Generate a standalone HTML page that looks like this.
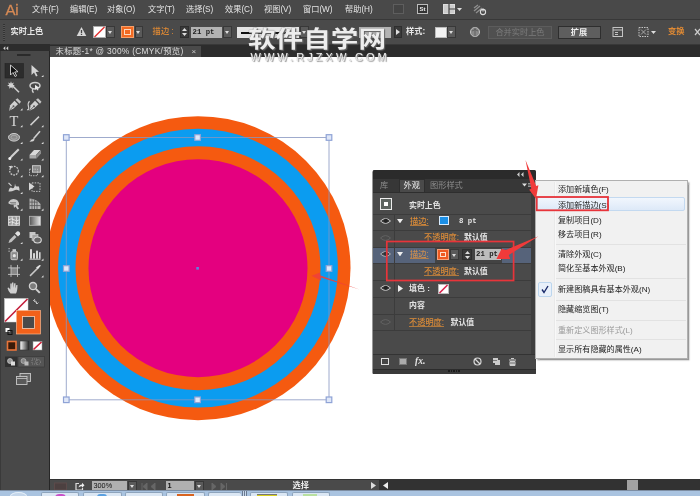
<!DOCTYPE html>
<html lang="zh-CN">
<head>
<meta charset="utf-8">
<title>Illustrator - 外观</title>
<style>
*{box-sizing:border-box;margin:0;padding:0}
html,body{width:700px;height:496px;overflow:hidden;background:#fff}
body{position:relative;will-change:transform;font-family:"Liberation Sans","Noto Sans CJK SC",sans-serif;font-size:8.2px;color:#ddd;line-height:1}
.abs,.abs>*{position:absolute}
.t{white-space:nowrap;line-height:11px;font-size:8.2px}
#menubar{left:0;top:0;width:700px;height:20px;background:#494949;border-bottom:1px solid #383838}
#menubar .mi{top:4px;color:#e4e4e4}
#ctrl{left:0;top:20px;width:700px;height:24px;background:#4a4a4a}
.dd{background:#5a5a5a;border:1px solid #383838}
.dd:after{content:"";position:absolute;left:50%;top:50%;margin:-1px 0 0 -2.5px;border:2.5px solid transparent;border-top:3px solid #ddd;border-bottom:0}
.or{color:#e08a34;font-weight:500}
#tabbar{left:49px;top:43.5px;width:651px;height:13.5px;background:#2c2c2c;border-top:1px solid #383838}
#tab{left:1px;top:1.5px;width:151px;height:11px;background:#4a4a4a}
#tools{left:0;top:44px;width:50px;height:447px;background:#484848;border-right:1.5px solid #262626;border-left:1px solid #3a3a3a}
#toolhead{left:-1px;top:0;width:50px;height:7px;background:#2c2c2c}
#status{left:50px;top:479px;width:650px;height:12px;background:#4a4a4a;border-top:1px solid #333}
#taskbar{left:0;top:490px;width:700px;height:6px;background:#a9c3e0}
#taskbar .tb{top:1.5px;height:6px;background:#dbe7f4;border:1px solid #8ea4bc;border-bottom:0;border-radius:2px 2px 0 0}
#panel{left:373px;top:170px;width:163px;height:204px;background:#4a4a4a;border-radius:2px 2px 1px 1px;overflow:hidden;box-shadow:-.5px 0 0 #333}
#panel .row{left:0;width:163px;border-top:1px solid #3c3c3c}
#panel .w{color:#e4e4e4;font-weight:bold;font-size:7.9px}
#panel .o{color:#dc8c38;text-decoration:underline;text-decoration-color:rgba(220,140,56,.7);text-decoration-thickness:.6px;text-underline-offset:1px;font-weight:500}
#cmenu{left:535px;top:179.5px;width:153px;height:179.5px;background:#f1f1f1;border:1px solid #b0b0b0;box-shadow:1.5px 1.5px 1.5px rgba(0,0,0,.4)}
#cmenu .it{left:22px;color:#1c1c1c;font-size:8.1px;line-height:11px;white-space:nowrap}
#cmenu .sep{left:20px;width:130px;height:1px;background:#e2e2e2}
</style>
</head>
<body>
<div id="menubar" class="abs">
<span style="left:5.5px;top:1px;font-size:15px;color:#d68a55;line-height:17px;letter-spacing:-.3px;-webkit-text-stroke:.3px #d68a55">Ai</span>
<span class="t mi" style="left:32px">文件(F)</span>
<span class="t mi" style="left:70px">编辑(E)</span>
<span class="t mi" style="left:107px">对象(O)</span>
<span class="t mi" style="left:148px">文字(T)</span>
<span class="t mi" style="left:186px">选择(S)</span>
<span class="t mi" style="left:225px">效果(C)</span>
<span class="t mi" style="left:264px">视图(V)</span>
<span class="t mi" style="left:303px">窗口(W)</span>
<span class="t mi" style="left:345px">帮助(H)</span>
<span style="left:393px;top:4px;width:11px;height:10px;border:1px solid #5e5e5e;background:#444"></span>
<span style="left:417px;top:4px;width:11px;height:10px;border:1px solid #bbb;background:#333;font-size:6px;line-height:8px;color:#eee;text-align:center;font-weight:bold">St</span>
<svg style="left:443px;top:4px" width="22" height="11" viewBox="0 0 22 11"><rect x="0.5" y="0.5" width="11" height="9" fill="#ccc" stroke="#ddd"/><path d="M6 0v10M6 5h6" stroke="#444" stroke-width="1.2"/><path d="M14 4h5l-2.5 3z" fill="#ddd"/></svg>
<svg style="left:473px;top:3px" width="14" height="13" viewBox="0 0 14 13"><path d="M1 8l6-5M3 10l6-5M1 5l4-3" stroke="#909090" stroke-width="1.3" fill="none"/><circle cx="10" cy="9" r="2.6" fill="none" stroke="#ddd" stroke-width="1.1"/><path d="M10 5.5v3" stroke="#ddd" stroke-width="1.1"/></svg>
</div>
<div id="ctrl" class="abs">
<span style="left:3px;top:4px;width:2px;height:17px;background:repeating-linear-gradient(#333 0 1px,#555 1px 2px)"></span>
<span class="t" style="left:10.5px;top:6px;color:#e8e8e8;font-weight:bold">实时上色</span>
<svg style="left:76px;top:6px" width="11" height="11" viewBox="0 0 11 11"><path d="M5.5 1L10.3 10H.7z" fill="#d8d8d8"/><path d="M5.5 4v3.2M5.5 8v1" stroke="#444" stroke-width="1.3"/></svg>
<svg style="left:93px;top:6px" width="13" height="12" viewBox="0 0 13 12"><rect x=".5" y=".5" width="12" height="11" fill="#fff" stroke="#aaa"/><path d="M1.5 11L11.5 1" stroke="#e03030" stroke-width="1.5"/></svg>
<span class="dd" style="left:106px;top:6px;width:9px;height:12px"></span>
<span style="left:120.5px;top:5.5px;width:13px;height:12.5px;background:#f26a22;border:1px solid #f7a06a"></span>
<span style="left:123.5px;top:8.5px;width:7px;height:6.5px;border:1px solid #fbd9c0;background:#f26a22"></span>
<span class="dd" style="left:134.5px;top:6px;width:8px;height:12px"></span>
<span class="t or" style="left:152.5px;top:6px;letter-spacing:.4px">描边<span style="position:static;margin-left:1.5px">:</span></span>
<span style="left:180px;top:6px;width:9px;height:12px;background:#3a3a3a;border:1px solid #2e2e2e"></span>
<svg style="left:181px;top:7px" width="7" height="10" viewBox="0 0 7 10"><path d="M3.5 1L6 4H1zM3.5 9L6 6H1z" fill="#ddd"/></svg>
<span style="left:191px;top:6.5px;width:30.5px;height:11.5px;background:#b3b3b3;font-family:'Liberation Mono',monospace;font-size:7.3px;font-weight:bold;line-height:11px;color:#222;padding-left:1.5px;white-space:nowrap">21 pt</span>
<span class="dd" style="left:222.5px;top:6px;width:9px;height:12px"></span>
<span style="left:237px;top:6.5px;width:62px;height:11.5px;background:#e4e4e4"></span>
<span style="left:241px;top:11.5px;width:54px;height:2px;background:#111"></span>
<span class="dd" style="left:300px;top:6px;width:9px;height:12px"></span>
<span style="left:358.5px;top:6.5px;width:32.5px;height:11.5px;background:#b3b3b3"></span>
<span style="left:393.5px;top:6px;width:8px;height:12px;background:#3a3a3a;border:1px solid #2e2e2e"></span>
<svg style="left:395.5px;top:9px" width="4" height="6" viewBox="0 0 4 6"><path d="M0 0v6L4 3z" fill="#ddd"/></svg>
<span class="t" style="left:406px;top:6px;color:#e6e6e6;font-weight:bold">样式:</span>
<span style="left:435px;top:6.5px;width:11.5px;height:11.5px;background:#f2f2f2;border:1px solid #bbb"></span>
<span class="dd" style="left:447px;top:6px;width:9px;height:12px"></span>
<svg style="left:468.5px;top:5.5px" width="12" height="12" viewBox="0 0 12 12"><circle cx="6" cy="6" r="4.6" fill="#8a8a8a" stroke="#bdbdbd"/><path d="M3 5q3-3 6 0M6 1.5v9" stroke="#555" fill="none" stroke-width=".8"/></svg>
<span class="t" style="left:488px;top:5.5px;width:64px;height:13px;border:1px solid #5c5c5c;background:#505050;color:#7c7c7c;text-align:center">合并实时上色</span>
<span class="t" style="left:557.5px;top:5.5px;width:43px;height:13px;border:1px solid #2e2e2e;background:#5e5e5e;color:#eee;text-align:center;font-weight:bold">扩展</span>
<svg style="left:612px;top:6px" width="12" height="12" viewBox="0 0 12 12"><rect x="1" y="1.5" width="9.5" height="9" fill="none" stroke="#c4c4c4"/><path d="M1 4h9.5M3 6.5h3M3 8.5h3" stroke="#c4c4c4"/></svg>
<svg style="left:638px;top:6px" width="20" height="12" viewBox="0 0 20 12"><rect x="1" y="1.5" width="9" height="9" fill="none" stroke="#c4c4c4" stroke-dasharray="1.5 1"/><path d="M3 3.5l5 5M8 3.5l-5 5" stroke="#bbb" stroke-width=".8"/><path d="M13 5h5l-2.5 3z" fill="#ddd"/></svg>
<span class="t or" style="left:668px;top:6px;font-weight:bold">变换</span>
<svg style="left:694px;top:6px" width="6" height="12" viewBox="0 0 6 12"><path d="M1 3l5 6M6 3L1 9" stroke="#ccc" stroke-width="1.2"/></svg>
</div>
<div id="tabbar" class="abs"><div id="tab"></div>
<span class="t" style="left:6.5px;top:1.5px;color:#dcdcdc;line-height:11px;font-size:8.4px;letter-spacing:.28px">未标题-1* @ 300% (CMYK/预览)</span>
<span class="t" style="left:142.5px;top:1.5px;color:#ccc;line-height:11px;font-size:8px">×</span>
</div>
<div id="tools" class="abs"><div id="toolhead"></div></div>
<svg class="abs" style="left:0;top:44px" width="50" height="447" viewBox="0 44 50 447">
<path d="M5.3 46.2L3.2 48.2 5.3 50.2zM8.2 46.2L6.1 48.2 8.2 50.2z" fill="#d0d0d0"/>
<rect x="17" y="54" width="13.500" height="2" fill="#2a2a2a"/>
<rect x="5" y="63.500" width="18.500" height="14.500" fill="#2c2c2c" stroke="#242424" stroke-width=".6"/>
<g transform="translate(14.0 70.5)"><path d="M-3.500-5.500V4.500L-1 2 1 6 2.600 5.200.700 1.500 4 1.200z" fill="#111" stroke="#d8d8d8" stroke-width=".9"/></g>
<g transform="translate(35.0 70.5)"><path d="M-3.500-5.500V4.500L-1 2 1 6 2.600 5.200.700 1.500 4 1.200z" fill="#d4d4d4"/></g>
<path d="M41.3 77.1l2.200 0 0-2.200z" fill="#e0e0e0"/>
<g transform="translate(14.0 87.2)"><path d="M-2-2L5 5" stroke="#cfcfcf" stroke-width="1.600"/><path d="M-3-6l.8 2.200 2.200-.8-1.200 2 2 1.200-2.200.6.200 2.400-1.800-1.600-1.800 1.600.2-2.400-2.200-.6 2-1.200-1.200-2 2.200.8z" fill="#d4d4d4"/></g>
<g transform="translate(35.0 87.2)"><ellipse cx="0" cy="-1.500" rx="5" ry="3.200" fill="none" stroke="#cfcfcf" stroke-width="1.500"/><path d="M-2 1.500q-1.500 2 .5 4" stroke="#cfcfcf" stroke-width="1.300" fill="none"/><path d="M0-2.500v5l1.500-1.200 1 2 1-.5-1-2 1.800-.3z" fill="#e8e8e8"/></g>
<g transform="translate(14.0 105.2)"><path d="M-5 5.500l1.200-5.500 4.300-4.500 3.500 3.500-4.500 4.300z" fill="#d0d0d0"/><path d="M1.500-5.500l2-1.500 3.500 3.500-1.500 2z" fill="#c4c4c4"/><path d="M-4.500 5l3.500-3.500" stroke="#555" stroke-width=".8"/><circle cx="-.5" cy="1" r="1" fill="#555"/></g>
<path d="M20.3 110.5l2.200 0 0-2.200z" fill="#e0e0e0"/>
<g transform="translate(34.5 105.2)"><path d="M-5 5.500l1.200-5.500 4.300-4.500 3.500 3.500-4.500 4.300z" fill="#d0d0d0"/><path d="M1.500-5.500l2-1.500 3.500 3.500-1.500 2z" fill="#c4c4c4"/><path d="M-4.500 5l3.500-3.500" stroke="#555" stroke-width=".8"/><circle cx="-.5" cy="1" r="1" fill="#555"/><path d="M-7.500 4.500q2.500.5 1.500-3t1-5.500" stroke="#cfcfcf" stroke-width="1.200" fill="none"/></g>
<g transform="translate(14.0 120.6)"><text x="0" y="5" text-anchor="middle" font-family="Liberation Serif,serif" font-size="14.500" fill="#d8d8d8">T</text></g>
<path d="M20.3 127.2l2.200 0 0-2.200z" fill="#e0e0e0"/>
<g transform="translate(35.0 120.6)"><path d="M-4.500 4.500L4 -4" stroke="#cfcfcf" stroke-width="1.500"/></g>
<path d="M41.3 127.2l2.200 0 0-2.200z" fill="#e0e0e0"/>
<g transform="translate(14.0 137.3)"><ellipse cx="0" cy="0" rx="5.500" ry="3.800" fill="#8a8a8a" stroke="#d0d0d0" stroke-width="1"/><ellipse cx="0" cy="0" rx="3" ry="2" fill="none" stroke="#bbb" stroke-width=".6"/></g>
<path d="M20.3 143.9l2.200 0 0-2.200z" fill="#e0e0e0"/>
<g transform="translate(35.0 137.3)"><path d="M5-6L-1.500 1.500" stroke="#cfcfcf" stroke-width="1.600"/><path d="M-5.500 4.500q2.500-4 5-2.500 0 2.500-5 2.500z" fill="#d8d8d8"/></g>
<path d="M41.3 143.9l2.200 0 0-2.200z" fill="#e0e0e0"/>
<g transform="translate(14.0 154.0)"><path d="M4-5.500l1.500 1.500-7.500 7.500-3 1.500 1.500-3z" fill="#cfcfcf"/><circle cx="-4.200" cy="4.500" r="1.500" fill="#f0f0f0"/></g>
<path d="M20.3 160.6l2.200 0 0-2.200z" fill="#e0e0e0"/>
<g transform="translate(35.0 154.0)"><path d="M-5.500 1l4.500-5h6.500l-4.500 5z" fill="#d8d8d8"/><path d="M-5.500 1h7v3.500h-7z" fill="#a8a8a8"/><path d="M1.500 1l4.500-5v3.500l-4.500 5z" fill="#8c8c8c"/></g>
<path d="M41.3 160.6l2.200 0 0-2.200z" fill="#e0e0e0"/>
<g transform="translate(14.0 170.7)"><circle cx="0" cy="0" r="4.300" fill="none" stroke="#c4c4c4" stroke-width="1.300" stroke-dasharray="1.800 1"/><path d="M-5.500-4.500l3.500-.5-1 3z" fill="#d8d8d8"/></g>
<path d="M20.3 177.3l2.200 0 0-2.200z" fill="#e0e0e0"/>
<g transform="translate(35.0 170.7)"><rect x="-2.500" y="-5" width="8" height="6.500" fill="#8a8a8a" stroke="#d0d0d0" stroke-width=".9"/><rect x="-5.500" y="-1.500" width="8" height="6.500" fill="none" stroke="#c0c0c0" stroke-width=".9" stroke-dasharray="1.500 1"/></g>
<path d="M41.3 177.3l2.200 0 0-2.200z" fill="#e0e0e0"/>
<g transform="translate(14.0 187.4)"><path d="M-5.500 4q1-5 3.500-3.500t3-4.500q.5 4 2.500 3t2 4.500q-3-2-5.500-.5t-5.500 1z" fill="#d0d0d0"/><path d="M-5.500-4.500l3 3" stroke="#cfcfcf" stroke-width="1.200"/></g>
<path d="M20.3 194.0l2.200 0 0-2.200z" fill="#e0e0e0"/>
<g transform="translate(35.0 187.4)"><rect x="-3" y="-4.500" width="8" height="8.500" fill="none" stroke="#c0c0c0" stroke-width="1" stroke-dasharray="1.500 1.200"/><path d="M-6-5v8l5.500-4z" fill="#d8d8d8"/></g>
<g transform="translate(14.0 204.1)"><path d="M-5.500-2q3-4.500 7.500-2.500 3.500 2 3 5.500l-2 .5 2 3-1.500 1-2-3-1.500 1.500-.5-3.500q-3 .5-5-1z" fill="#c8c8c8"/><path d="M-4-1.500h6M-3 0h5" stroke="#666" stroke-width=".7"/></g>
<path d="M20.3 210.7l2.200 0 0-2.200z" fill="#e0e0e0"/>
<g transform="translate(35.0 204.1)"><path d="M-5.500-5.500v10.500h11v-5q-4-5-11-5.500z" fill="#b4b4b4"/><path d="M-3-5v10M-.5-4v9M2-2.500v7.500M-5.500-2h8M-5.500 1.500h11" stroke="#555" stroke-width=".8"/></g>
<path d="M41.3 210.7l2.200 0 0-2.200z" fill="#e0e0e0"/>
<g transform="translate(14.0 220.8)"><rect x="-5.500" y="-4.500" width="11" height="9" fill="#9a9a9a" stroke="#d8d8d8" stroke-width=".9"/><path d="M-5.500-1q3-2 5.500 0t5.500 0M-5.500 2q3-2 5.500 0t5.500 0M-2-4.500q1.500 4 0 9M2-4.500q1.500 4 0 9" stroke="#eee" stroke-width=".8" fill="none"/></g>
<defs><linearGradient id="gr1" x1="0" x2="1" y1="0" y2="0"><stop offset="0" stop-color="#555"/><stop offset="1" stop-color="#e8e8e8"/></linearGradient><linearGradient id="gr2" x1="0" x2="1" y1="0" y2="0"><stop offset="0" stop-color="#fff"/><stop offset="1" stop-color="#222"/></linearGradient></defs>
<g transform="translate(35.0 220.8)"><rect x="-5.500" y="-4.500" width="11" height="9" fill="url(#gr1)" stroke="#b8b8b8" stroke-width=".8"/></g>
<g transform="translate(14.0 237.5)"><path d="M-5.500 5.500l1-3 5-5 2 2-5 5z" fill="#c0c0c0"/><path d="M1-4l2-2q1.500-.5 2.500.5t.5 2.500l-2 2z" fill="#e0e0e0"/></g>
<path d="M20.3 244.1l2.200 0 0-2.200z" fill="#e0e0e0"/>
<g transform="translate(35.0 237.5)"><rect x="-5.500" y="-5.500" width="6" height="6" fill="#c8c8c8"/><rect x="-3" y="-3" width="6" height="6" fill="#a4a4a4" stroke="#ddd" stroke-width=".5"/><ellipse cx="2.500" cy="2.500" rx="3.800" ry="3" fill="#666" stroke="#d8d8d8" stroke-width="1.100"/></g>
<g transform="translate(14.0 254.2)"><rect x="-3" y="-2.500" width="6.500" height="8" rx="1" fill="#8c8c8c" stroke="#d0d0d0" stroke-width=".9"/><rect x="-1.500" y="-5" width="3.500" height="2.500" fill="#d0d0d0"/><circle cx=".3" cy="1.500" r="1.600" fill="#e4e4e4"/><path d="M-5.500-5.500h1.200M-5.500-3h1.200" stroke="#d0d0d0" stroke-width="1"/></g>
<path d="M20.3 260.8l2.200 0 0-2.200z" fill="#e0e0e0"/>
<g transform="translate(35.0 254.2)"><path d="M-5.500 5h11" stroke="#d0d0d0" stroke-width="1"/><rect x="-5" y="-5" width="2" height="9.500" fill="#d4d4d4"/><rect x="-2" y="-1" width="2" height="5.500" fill="#d4d4d4"/><rect x="1" y="-3.500" width="2" height="8" fill="#d4d4d4"/><rect x="4" y="-2" width="1.600" height="6.500" fill="#d4d4d4"/></g>
<path d="M41.3 260.8l2.200 0 0-2.200z" fill="#e0e0e0"/>
<g transform="translate(14.0 270.9)"><rect x="-3" y="-3" width="6.500" height="6.500" fill="#888" /><path d="M-3-6v12M3.500-6v12M-6-3h12M-6 3.500h12" stroke="#c4c4c4" stroke-width=".9"/></g>
<g transform="translate(35.0 270.9)"><path d="M-5 5l8-8" stroke="#c8c8c8" stroke-width="1.500"/><path d="M1-3.500l3.500-2.500 1.500.5-3 3.500z" fill="#e4e4e4"/></g>
<path d="M41.3 277.5l2.200 0 0-2.200z" fill="#e0e0e0"/>
<g transform="translate(14.0 287.6)"><path d="M-3.500 6q-2.500-3-3-5.500l1.200-.5 1.600 2v-6h1.400v4.500l.3-5.500h1.400l.2 5.500.6-4.800h1.300v5.200l.8-3.500h1.200q0 6-1.500 8.600z" fill="#cfcfcf"/></g>
<g transform="translate(34.0 287.6)"><circle cx="-1" cy="-1.500" r="3.600" fill="#7c7c7c" stroke="#d0d0d0" stroke-width="1.300"/><path d="M1.800 1.300l4 4" stroke="#d0d0d0" stroke-width="2"/></g>
<rect x="4.500" y="298.500" width="23.500" height="23.500" fill="#fff" stroke="#d0d0d0" stroke-width=".5"/>
<path d="M5 321.500L27.500 299" stroke="#c41e3a" stroke-width="1.600"/>
<rect x="16.500" y="310.500" width="24" height="23.500" fill="#f2611a" stroke="#f9b48c" stroke-width=".7"/>
<rect x="22.500" y="316.500" width="12" height="12" fill="#4a4a4a" stroke="#fbd2b8" stroke-width=".8"/>
<path d="M33.500 300.500q3.500 0 3.500 3.500M33.500 300.500l1.600-1.400M33.500 300.500l1.600 1.400M37 304l-1.400-1.500M37 304l1.400-1.500" stroke="#c8c8c8" stroke-width=".9" fill="none"/>
<rect x="5.500" y="328" width="4" height="4" fill="#fff"/><rect x="8" y="330.500" width="4" height="4" fill="none" stroke="#111" stroke-width="1"/>
<rect x="7.500" y="341.500" width="8.500" height="8.500" fill="#3a1a08" stroke="#e8743a" stroke-width="1.600"/>
<rect x="20" y="341" width="9" height="9" fill="url(#gr2)" stroke="#333" stroke-width=".6"/>
<rect x="33" y="341.500" width="9" height="8.500" fill="#fff" stroke="#999" stroke-width=".5"/><path d="M33.500 349.500L41.500 342" stroke="#d02038" stroke-width="1.600"/>
<rect x="5" y="356.500" width="12.500" height="10.500" fill="#303030"/>
<rect x="18" y="356.500" width="26.500" height="10.500" fill="#555" stroke="#3a3a3a" stroke-width=".7"/>
<circle cx="10" cy="361" r="2.500" fill="#999" stroke="#ccc" stroke-width=".7"/><rect x="11" y="361.500" width="4" height="4" fill="#ddd"/>
<circle cx="23.500" cy="361" r="2.500" fill="#888" stroke="#bbb" stroke-width=".7"/><rect x="24.500" y="361.500" width="4" height="4" fill="#bbb"/>
<rect x="32" y="359" width="5" height="5" fill="none" stroke="#999" stroke-width=".7" stroke-dasharray="1 1"/><circle cx="38" cy="362" r="2.500" fill="none" stroke="#999" stroke-width=".7" stroke-dasharray="1 1"/>
<rect x="20" y="373.500" width="10.500" height="8" fill="#666" stroke="#c8c8c8" stroke-width=".9"/><rect x="16.500" y="376.500" width="10.500" height="8" fill="#5a5a5a" stroke="#c8c8c8" stroke-width=".9"/><path d="M17 378.500h10" stroke="#c8c8c8" stroke-width=".8"/>
</svg>
<svg class="abs" id="art" style="left:50px;top:57px" width="650" height="422" viewBox="50 57 650 422">
<ellipse cx="198" cy="268.2" rx="152.5" ry="152" fill="#f55a10"/>
<ellipse cx="198" cy="268.2" rx="139.9" ry="139.4" fill="#0b9cf0"/>
<ellipse cx="198" cy="268.2" rx="122.5" ry="122" fill="#f55a10"/>
<ellipse cx="198" cy="268.2" rx="109.5" ry="109" fill="#e4007f"/>
<path d="M66.300 137.500H329M66.300 399.800H329" stroke="#8696c0" stroke-width=".8" fill="none"/>
<path d="M66.300 137.500V399.800M329 137.500V399.800" stroke="#8696c0" stroke-width=".8" fill="none"/>
<g fill="#dfe7f8" stroke="#8fa3d6" stroke-width="1.200">
<rect x="63.500" y="134.700" width="5.600" height="5.600"/><rect x="194.800" y="134.700" width="5.600" height="5.600"/><rect x="326.200" y="134.700" width="5.600" height="5.600"/>
<rect x="63.500" y="265.700" width="5.600" height="5.600"/><rect x="326.200" y="265.700" width="5.600" height="5.600"/>
<rect x="63.500" y="397" width="5.600" height="5.600"/><rect x="194.800" y="397" width="5.600" height="5.600"/><rect x="326.200" y="397" width="5.600" height="5.600"/>
</g>
<rect x="196.300" y="267" width="2.600" height="2.600" fill="#5a86e0"/>
</svg>
<div id="panel" class="abs">
<div style="left:0;top:0;width:163px;height:9px;background:#2b2b2b"></div>
<div style="left:0;top:9px;width:163px;height:13px;background:#373737"></div>
<div style="left:26px;top:9px;width:26px;height:13px;background:#4a4a4a;border:1px solid #2e2e2e;border-bottom:0"></div>
<span class="t" style="left:7px;top:10px;color:#8e8e8e">库</span>
<span class="t" style="left:30.5px;top:10px;color:#f0f0f0">外观</span>
<span class="t" style="left:57px;top:10px;color:#8e8e8e">图形样式</span>
<svg style="left:143px;top:2px" width="8" height="5" viewBox="0 0 8 5"><path d="M3.5 0L1 2.5 3.5 5zM7.5 0L5 2.5 7.5 5z" fill="#ccc"/></svg>
<svg style="left:149px;top:12px" width="9" height="6" viewBox="0 0 9 6"><path d="M0 1.5h5l-2.5 3z" fill="#ddd"/><path d="M6 1.5h3M6 3h3M6 4.5h3" stroke="#bbb" stroke-width=".7"/></svg>
<!-- rows -->
<div class="row" style="top:22px;height:22px;border-top-color:#2e2e2e"></div>
<div class="row" style="top:44px;height:17px"></div>
<div class="row" style="top:60px;height:17px"></div>
<div class="row" style="top:76.5px;height:16.5px;background:#56637a"></div>
<div class="row" style="top:93px;height:17px"></div>
<div class="row" style="top:110px;height:17px"></div>
<div class="row" style="top:126.5px;height:17px"></div>
<div class="row" style="top:143.5px;height:17px"></div>
<div class="row" style="top:160px;height:24px"></div>
<div style="left:21px;top:44px;width:1px;height:116px;background:#3c3c3c"></div>
<div style="left:158px;top:22px;width:5px;height:162px;background:#3e3e3e"></div>
<!-- row1 -->
<span style="left:7px;top:28px;width:12px;height:12px;border:1.3px solid #eee;background:#5d6460"></span>
<span style="left:11px;top:32px;width:4px;height:4px;background:#fff"></span>
<span class="t w" style="left:36px;top:29.5px">实时上色</span>
<!-- row2 -->
<svg style="left:7px;top:47.3px" width="11" height="8" viewBox="0 0 11 8"><path d="M.5 4Q5.5-.8 10.500 4Q5.500 8.800.5 4z" fill="#3a3a3a" stroke="#c8c8c8" stroke-width="1"/><circle cx="5.8" cy="3.800" r="2" fill="#222"/></svg>
<svg style="left:24px;top:48.8px" width="6" height="4.5" viewBox="0 0 7 5"><path d="M0 0h7L3.500 5z" fill="#eee"/></svg>
<span class="t o" style="left:37px;top:45.8px">描边:</span>
<span style="left:66px;top:46.3px;width:9.500px;height:9px;background:#1b8fe6;border:1px solid #d8ecff"></span>
<span class="t w" style="left:86px;top:45.8px;font-family:'Liberation Mono',monospace;font-size:7.4px;font-weight:bold">8 pt</span>
<!-- row3 -->
<svg style="left:7px;top:63.8px;opacity:.18" width="11" height="8" viewBox="0 0 11 8"><path d="M.5 4Q5.500-.8 10.500 4Q5.500 8.800.5 4z" fill="none" stroke="#c8c8c8" stroke-width="1"/></svg>
<span class="t o" style="left:51px;top:62.3px">不透明度:</span>
<span class="t w" style="left:91px;top:62.3px">默认值</span>
<!-- row4 -->
<span style="left:62px;top:78px;width:66.5px;height:14.5px;background:#434343"></span>
<svg style="left:7px;top:80.3px;opacity:.75" width="11" height="8" viewBox="0 0 11 8"><path d="M.5 4Q5.500-.8 10.500 4Q5.500 8.800.5 4z" fill="#3a3a3a" stroke="#c8c8c8" stroke-width="1"/><circle cx="5.800" cy="3.800" r="2" fill="#222"/></svg>
<svg style="left:24px;top:81.8px" width="6" height="4.5" viewBox="0 0 7 5"><path d="M0 0h7L3.500 5z" fill="#eee"/></svg>
<span class="t o" style="left:37px;top:78.8px;color:#c98d52">描边:</span>
<span style="left:63.500px;top:78.8px;width:12.500px;height:11.500px;background:#ee5a22;border:1px solid #f7a07a"></span>
<span style="left:67px;top:82.3px;width:5.5px;height:4.8px;border:1px solid #fde0cc;background:#ee5a22"></span>
<span class="dd" style="left:76.500px;top:78.8px;width:9.500px;height:11.500px"></span>
<span style="left:88.500px;top:78.8px;width:10.500px;height:11.500px;background:#3a3a3a;border:1px solid #2e2e2e"></span>
<svg style="left:90.500px;top:79.8px" width="7" height="10" viewBox="0 0 7 10"><path d="M3.500 1L6 4H1zM3.500 9L6 6H1z" fill="#ddd"/></svg>
<span style="left:101.500px;top:79.3px;width:26px;height:11px;background:#bdbdbd;font-family:'Liberation Mono',monospace;font-size:7.3px;font-weight:bold;line-height:10.500px;color:#222;padding-left:1.500px;white-space:nowrap;overflow:hidden">21 pt</span>
<!-- row5 -->
<span class="t o" style="left:51px;top:96.4px">不透明度:</span>
<span class="t w" style="left:91px;top:96.4px">默认值</span>
<!-- row6 -->
<svg style="left:7px;top:114px" width="11" height="8" viewBox="0 0 11 8"><path d="M.5 4Q5.500-.8 10.500 4Q5.500 8.800.5 4z" fill="#3a3a3a" stroke="#c8c8c8" stroke-width="1"/><circle cx="5.800" cy="3.800" r="2" fill="#222"/></svg>
<svg style="left:24.500px;top:114.500px" width="5" height="7" viewBox="0 0 5 7"><path d="M0 0v7L5 3.500z" fill="#eee"/></svg>
<span class="t w" style="left:36px;top:112.500px">填色<span style="position:static;margin-left:2.5px">:</span></span>
<svg style="left:65px;top:113.500px" width="11" height="10" viewBox="0 0 11 10"><rect x=".5" y=".5" width="10" height="9" fill="#fff" stroke="#bbb"/><path d="M1.500 9L9.500 1" stroke="#d8204a" stroke-width="1.600"/></svg>
<!-- row7 -->
<span class="t w" style="left:36px;top:129.500px">内容</span>
<!-- row8 -->
<svg style="left:7px;top:148px;opacity:.18" width="11" height="8" viewBox="0 0 11 8"><path d="M.5 4Q5.500-.8 10.500 4Q5.500 8.800.5 4z" fill="none" stroke="#c8c8c8" stroke-width="1"/></svg>
<span class="t o" style="left:36px;top:146.500px">不透明度:</span>
<span class="t w" style="left:77.500px;top:146.500px">默认值</span>
<!-- footer -->
<div style="left:0;top:184px;width:163px;height:15px;background:#474747;border-top:1px solid #333"></div>
<div style="left:0;top:198.500px;width:163px;height:5.500px;background:#3a3a3a;border-top:1px solid #2c2c2c"></div>
<span style="left:75px;top:200px;width:13px;height:2px;background:repeating-linear-gradient(90deg,#1c1c1c 0 1.500px,#3a3a3a 1.500px 2.600px)"></span>
<span style="left:8px;top:188px;width:7.500px;height:7px;border:1.300px solid #e0e0e0"></span>
<span style="left:26px;top:188px;width:7.500px;height:7px;border:1px solid #777;background:#aaa"></span>
<span class="t" style="left:42px;top:186px;color:#e4e4e4;font-family:'Liberation Serif',serif;font-style:italic;font-size:9.500px;font-weight:bold">fx.</span>
<svg style="left:100px;top:187px" width="9" height="9" viewBox="0 0 9 9"><circle cx="4.500" cy="4.500" r="3.500" fill="none" stroke="#d8d8d8" stroke-width="1.200"/><path d="M2 2l5 5" stroke="#d8d8d8" stroke-width="1.200"/></svg>
<svg style="left:118.500px;top:187px" width="9" height="9" viewBox="0 0 9 9"><path d="M1 1h5v2h2v5H3V6H1z" fill="#ccc"/><path d="M1 3.500h4" stroke="#666" stroke-width=".8"/></svg>
<svg style="left:135px;top:187px" width="9" height="9" viewBox="0 0 9 9"><path d="M3 1.500h3M1 3h7M2 4.500h5v4H2z" fill="#ccc" stroke="#ccc" stroke-width="1"/><path d="M2 6h5" stroke="#555" stroke-width=".8"/></svg>
</div>
<div id="cmenu" class="abs">
<div style="left:17.5px;top:1px;width:1px;height:175px;background:#e9e9e9;border-right:1px solid #f8f8f8;box-sizing:content-box"></div>
<div style="left:1px;top:16px;width:148px;height:14.5px;background:linear-gradient(#f1f6fd,#dde9f8);border:1px solid #c3d9f0;border-radius:2px"></div>
<span class="it" style="top:3px">添加新填色(F)</span>
<span class="it" style="top:19px">添加新描边(S)</span>
<span class="it" style="top:34px">复制项目(D)</span>
<span class="it" style="top:48px">移去项目(R)</span>
<div class="sep" style="top:63px"></div>
<span class="it" style="top:68px">清除外观(C)</span>
<span class="it" style="top:82.5px">简化至基本外观(B)</span>
<div class="sep" style="top:97.5px"></div>
<div style="left:1.5px;top:101px;width:14px;height:15px;background:#e8f0fa;border:1px solid #bcd6ee;border-radius:2px"></div>
<svg style="left:5px;top:104.5px" width="8" height="9" viewBox="0 0 8 9"><path d="M1 4.5l2 3L7 1" fill="none" stroke="#1a2a6a" stroke-width="1.4"/></svg>
<span class="it" style="top:103px">新建图稿具有基本外观(N)</span>
<div class="sep" style="top:119px"></div>
<span class="it" style="top:123.5px">隐藏缩览图(T)</span>
<div class="sep" style="top:139px"></div>
<span class="it" style="top:144px;color:#9a9a9a">重新定义图形样式(L)</span>
<div class="sep" style="top:158.5px"></div>
<span class="it" style="top:163.5px">显示所有隐藏的属性(A)</span>
</div>
<svg class="abs" style="left:0;top:0;pointer-events:none" width="700" height="496" viewBox="0 0 700 496">
<rect x="386.8" y="241.5" width="126.8" height="39" fill="none" stroke="#e8343a" stroke-width="1.7"/>
<rect x="536.7" y="197" width="71.3" height="13.3" fill="none" stroke="#e8343a" stroke-width="1.8"/>
<path d="M525.5 160L536.2 186 538.4 185.2 536 198.8 529.2 189.8 531.3 188.6z" fill="#f03a3a"/>
<path d="M538.5 236.2L505.8 250 501.6 248.8 496.4 259 510.2 259 508.8 255z" fill="#f03a3a"/>
<path d="M359.500 289.500L321 277.500 320.800 280.500 311.500 275.800 320 272.600 320.500 275.400z" fill="#f0403a" opacity=".9"/>
</svg>
<div class="abs" style="left:238px;top:21px;width:160px;height:44px;pointer-events:none">
<span style="left:9.5px;top:3.5px;font-family:'Liberation Sans','Noto Sans CJK SC',sans-serif;font-weight:bold;font-size:23px;line-height:28px;color:#ededed;white-space:nowrap;transform-origin:0 0;transform:scaleX(1.2);text-shadow:0 0 1px #555,1px 1px 1px #666">软件自学网</span>
<span style="left:12.500px;top:30px;font-family:'Liberation Sans',sans-serif;font-size:11px;line-height:12px;color:#f0f0f0;white-space:nowrap;letter-spacing:3.050px;text-shadow:0 0 1px #777,1px 1px 1px #999">WWW.RJZXW.COM</span>
</div>
<div id="status" class="abs">
<svg style="left:4px;top:1.5px" width="14" height="9" viewBox="0 0 14 9"><rect x=".5" y="1" width="12" height="7" fill="#4c4040" stroke="#5c4a4a"/></svg>
<svg style="left:24.5px;top:1.5px" width="10" height="9" viewBox="0 0 10 9"><path d="M4 1.5H1v6.500h6.500V6" fill="none" stroke="#ddd" stroke-width="1.200"/><path d="M3.500 5.500q.5-3 3.500-3V.8L9.500 3.300 7 5.800V4.300q-2 0-3.500 1.200z" fill="#eee"/></svg>
<span style="left:42px;top:1px;width:35px;height:10px;background:#b0b0b0;font-size:7.300px;line-height:10px;color:#111;padding-left:1.500px">300%</span>
<span class="dd" style="left:77.500px;top:1px;width:9.500px;height:10px"></span>
<svg style="left:91px;top:2.500px" width="22" height="7" viewBox="0 0 22 7"><path d="M1 0v7M6 0v7L2 3.500zM14 0v7L10 3.500z" stroke="#666" stroke-width="1" fill="#666"/></svg>
<span style="left:116px;top:1px;width:28px;height:10px;background:#b0b0b0;font-size:7.300px;line-height:10px;color:#111;padding-left:1.500px;font-weight:bold">1</span>
<span class="dd" style="left:144.500px;top:1px;width:9.500px;height:10px"></span>
<svg style="left:160px;top:2.500px" width="22" height="7" viewBox="0 0 22 7"><path d="M2 0v7L6 3.500zM11 0v7L15 3.500zM16.500 0v7" stroke="#666" stroke-width="1" fill="#666"/></svg>
<span class="t" style="left:242.500px;top:0;color:#eee;font-weight:bold;line-height:11px">选择</span>
<svg style="left:321px;top:2px" width="5" height="7" viewBox="0 0 5 7"><path d="M0 0v7L5 3.500z" fill="#ddd"/></svg>
<span style="left:328.500px;top:0;width:322px;height:11px;background:#323232"></span>
<svg style="left:333px;top:2px" width="5" height="7" viewBox="0 0 5 7"><path d="M5 0v7L0 3.500z" fill="#eee"/></svg>
<span style="left:577px;top:0;width:10.500px;height:11px;background:#a2a2a2"></span>
</div>
<div id="taskbar" class="abs">
<span style="left:0;top:0;width:700px;height:1px;background:#7d8ea3"></span>
<span style="left:10px;top:2px;width:17px;height:8px;border-radius:50%;background:#c4d6ea;border:1px solid #e4eef8"></span>
<span class="tb" style="left:41px;width:38px"></span>
<span class="tb" style="left:83px;width:39px"></span>
<span class="tb" style="left:124.500px;width:38.500px"></span>
<span class="tb" style="left:166px;width:39px"></span>
<span class="tb" style="left:207.500px;width:33px;border-right:0"></span>
<span class="tb" style="left:250px;width:38px"></span>
<span class="tb" style="left:291.500px;width:38.500px"></span>
<span style="left:55px;top:3.500px;width:11px;height:4px;border-radius:5px 5px 0 0;background:#c850c8"></span>
<span style="left:97px;top:4px;width:10px;height:3px;border-radius:5px 5px 0 0;background:#5aa0e0"></span>
<span style="left:176.500px;top:3.500px;width:17px;height:3px;background:#d86420"></span>
<span style="left:257px;top:4px;width:20px;height:2.500px;background:#d8d020;border-top:1px solid #777"></span>
<span style="left:303px;top:4px;width:14px;height:2px;background:#b8e0a0"></span>
<span style="left:242px;top:1px;width:5px;height:5px;background:repeating-linear-gradient(90deg,#6a7a90 0 1px,#c8d8ec 1px 2px)"></span>
</div>
</body>
</html>
